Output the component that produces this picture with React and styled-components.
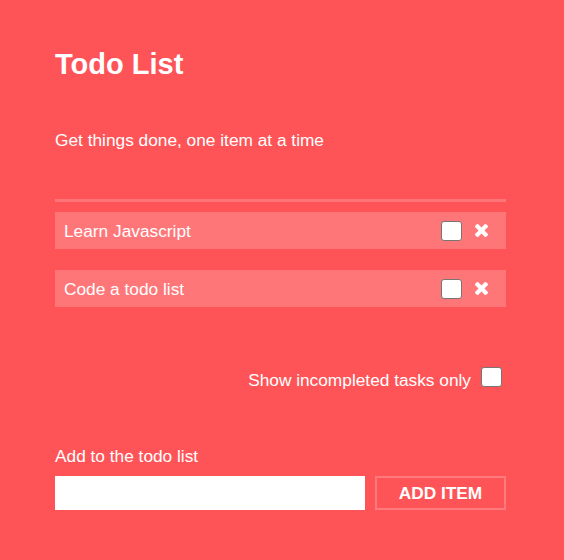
import React, { useState } from "react";
import styled, { createGlobalStyle } from "styled-components";

const Global = createGlobalStyle`
  html, body { margin: 0; padding: 0; background: #ff5457; }
  body { font-family: "Liberation Sans", Arial, Helvetica, sans-serif; color: #fff; }
  * { box-sizing: border-box; }
`;

const Page = styled.div`
  width: 564px;
  min-height: 560px;
  padding: 47px 58px 40px 55px;
  background: #ff5457;
`;

const Title = styled.h1`
  margin: 0;
  font-size: 29px;
  line-height: 35px;
  font-weight: 700;
`;

const Subtitle = styled.p`
  margin: 48px 0 0;
  font-size: 17.3px;
  line-height: 20px;
`;

const Divider = styled.div`
  margin-top: 49px;
  height: 3px;
  background: #ff7679;
`;

const List = styled.ul`
  list-style: none;
  margin: 10px 0 0;
  padding: 0;
  display: flex;
  flex-direction: column;
  gap: 21px;
`;

const Item = styled.li`
  display: flex;
  align-items: center;
  height: 37px;
  padding: 0 18px 0 9px;
  background: #ff7679;
  font-size: 17.3px;
`;

const ItemText = styled.span`
  flex: 1;
  position: relative;
  top: 1px;
`;

const Check = styled.input.attrs({ type: "checkbox" })`
  appearance: none;
  margin: 0;
  width: 21px;
  height: 20px;
  background: #fff;
  border: 1px solid #767676;
  border-radius: 3px;
  flex: none;
`;

const DeleteButton = styled.button`
  margin-left: 13px;
  padding: 0;
  border: 0;
  background: none;
  color: #fff;
  display: flex;
  align-items: center;
  cursor: pointer;
`;

const FilterRow = styled.label`
  margin-top: 60px;
  display: flex;
  justify-content: flex-end;
  align-items: center;
  gap: 10px;
  padding-right: 4px;
  font-size: 17.3px;
  line-height: 20px;
  height: 20px;
`;

const FilterText = styled.span`
  position: relative;
  top: 3px;
`;

const AddLabel = styled.label`
  display: block;
  margin-top: 59px;
  font-size: 17.3px;
  line-height: 20px;
`;

const AddRow = styled.form`
  margin-top: 10px;
  display: flex;
  gap: 10px;
`;

const TextInput = styled.input`
  width: 310px;
  height: 34px;
  border: 0;
  margin: 0;
  padding: 0 8px;
  background: #fff;
  font-size: 16px;
  font-family: inherit;
  outline: none;
`;

const AddButton = styled.button`
  flex: 1;
  height: 34px;
  margin: 0;
  border: 2px solid #ff7a7c;
  background: transparent;
  color: #fff;
  font-family: inherit;
  font-size: 17.3px;
  font-weight: 700;
  text-transform: uppercase;
  cursor: pointer;
`;

const TimesIcon = () => (
  <svg width="13" height="13" viewBox="110 366 1188 1188" fill="currentColor" aria-hidden="true">
    <path d="M1298 1322q0 40-28 68l-136 136q-28 28-68 28t-68-28l-294-294-294 294q-28 28-68 28t-68-28l-136-136q-28-28-28-68t28-68l294-294-294-294q-28-28-28-68t28-68l136-136q28-28 68-28t68 28l294 294 294-294q28-28 68-28t68 28l136 136q28 28 28 68t-28 68l-294 294 294 294q28 28 28 68z" />
  </svg>
);

export default function App() {
  const [items] = useState(["Learn Javascript", "Code a todo list"]);
  return (
    <>
      <Global />
      <Page>
        <Title>Todo List</Title>
        <Subtitle>Get things done, one item at a time</Subtitle>
        <Divider />
        <List>
          {items.map((t) => (
            <Item key={t}>
              <ItemText>{t}</ItemText>
              <Check />
              <DeleteButton aria-label="delete">
                <TimesIcon />
              </DeleteButton>
            </Item>
          ))}
        </List>
        <FilterRow>
          <FilterText>Show incompleted tasks only</FilterText>
          <Check />
        </FilterRow>
        <AddLabel htmlFor="new-item">Add to the todo list</AddLabel>
        <AddRow onSubmit={(e) => e.preventDefault()}>
          <TextInput id="new-item" />
          <AddButton type="submit">Add item</AddButton>
        </AddRow>
      </Page>
    </>
  );
}
